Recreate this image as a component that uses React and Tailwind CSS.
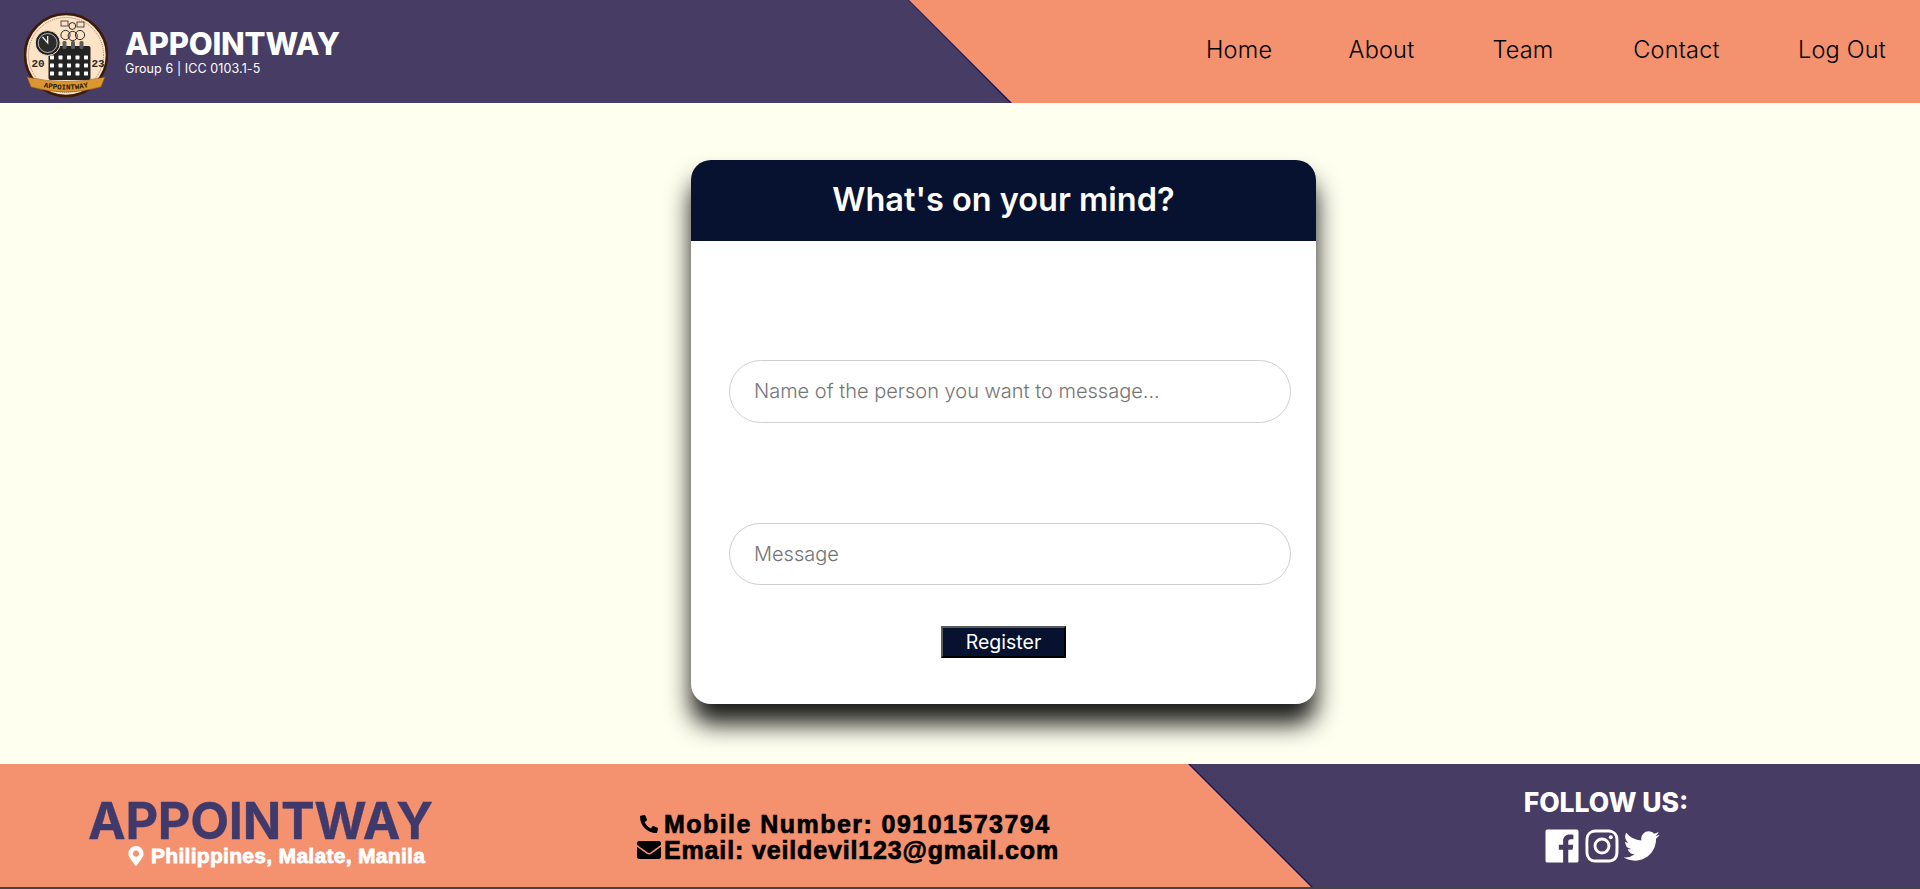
import React from "react";
import { FaMapMarkerAlt, FaPhoneAlt, FaEnvelope } from "react-icons/fa";
import { BiLogoFacebookSquare, BiLogoInstagram, BiLogoTwitter } from "react-icons/bi";

function Logo() {
  const xs = [28, 36.5, 45, 53.5, 62];
  const ys = [45.5, 53.5, 61.5];
  return (
    <svg width="84" height="86" viewBox="0 0 84 86" className="mt-[8px] shrink-0">
      <circle cx="42" cy="43" r="41" fill="#fde3c6" stroke="#3a1c08" strokeWidth="2.6" />
      <circle cx="42" cy="43" r="37.5" fill="none" stroke="#5a4030" strokeWidth="0.6" strokeDasharray="1 1" />
      <circle cx="48.3" cy="14" r="3.4" fill="none" stroke="#2a2a2a" strokeWidth="1" />
      <circle cx="41.5" cy="23" r="4.6" fill="none" stroke="#2a2a2a" strokeWidth="1" />
      <circle cx="56" cy="23" r="4.6" fill="none" stroke="#2a2a2a" strokeWidth="1" />
      <circle cx="48.7" cy="24" r="4.6" fill="none" stroke="#2a2a2a" strokeWidth="1" />
      <rect x="37" y="9" width="7" height="5" fill="#fde3c6" stroke="#2a2a2a" strokeWidth="0.8" />
      <rect x="53" y="10" width="7" height="5" fill="#fde3c6" stroke="#2a2a2a" strokeWidth="0.8" />
      <rect x="24.5" y="34" width="42" height="34" rx="2" fill="#232323" />
      <rect x="38.5" y="29" width="4" height="8" rx="1.5" fill="#5c5c5c" />
      <rect x="47" y="29" width="4" height="8" rx="1.5" fill="#5c5c5c" />
      <rect x="55.5" y="29" width="4" height="8" rx="1.5" fill="#5c5c5c" />
      {ys.map((y) => xs.map((x) => <rect key={`${x}-${y}`} x={x - 2} y={y - 2} width="4" height="4" fill="#fff" rx="0.4" />))}
      <circle cx="23.7" cy="31" r="12.5" fill="#222" stroke="#fde3c6" strokeWidth="1" />
      <circle cx="23.7" cy="31" r="9.5" fill="#2b2b2b" stroke="#ddd" strokeWidth="0.8" />
      <path d="M18.5 25 L23.7 31 L23.7 24" fill="none" stroke="#fff" strokeWidth="1.2" />
      <text x="14" y="55" textAnchor="middle" fontSize="11" fontWeight="700" fill="#2a2a2a" fontFamily="'Liberation Mono', monospace">20</text>
      <text x="74" y="55" textAnchor="middle" fontSize="11" fontWeight="700" fill="#2a2a2a" fontFamily="'Liberation Mono', monospace">23</text>
      <path d="M3 65 Q42 74 81 65 L77 75 Q42 85 7 75 Z" fill="#dc9630" stroke="#7a4a10" strokeWidth="0.5" />
      <path id="logo-arc" d="M10 73 Q42 82 74 73" fill="none" />
      <text fontSize="7.5" fontWeight="700" fill="#2a1a08" fontFamily="'Liberation Mono', monospace">
        <textPath href="#logo-arc" startOffset="50%" textAnchor="middle">APPOINTWAY</textPath>
      </text>
    </svg>
  );
}

export default function App() {
  const nav = [
    { label: "Home", width: "w-[66px]" },
    { label: "About", width: "w-[67px]" },
    { label: "Team", width: "w-[64px]" },
    { label: "Contact", width: "w-[91px]" },
    { label: "Log Out", width: "w-[85px]" },
  ];
  return (
    <div className="flex h-[889px] w-full flex-col overflow-hidden bg-[#fffff0] font-['Inter','Noto_Sans',sans-serif]">
      <header className="flex h-[103px] shrink-0 bg-[#f4916f]">
        <div className="h-full w-[1012px] shrink-0 bg-[#14145a] [clip-path:polygon(0_0,909px_0,1012px_100%,0_100%)]">
          <div className="flex h-full items-center gap-[17px] bg-[#463c64] pb-[1px] pl-[24px] [clip-path:polygon(0_0,908px_0,1010px_100%,0_100%)]">
            <Logo />
            <div className="mt-[2px] flex flex-col pb-[2px] text-white">
              <span className="text-[31px] leading-[34px] font-extrabold tracking-[-0.2px]">APPOINTWAY</span>
              <span className="text-[12.5px] leading-[15px] tracking-[0.1px]">Group 6 | ICC 0103.1-5</span>
            </div>
          </div>
        </div>
        <nav className="flex flex-1 items-center justify-end gap-[76px] pr-[37px] pb-[4px] text-[23.5px] font-light tracking-[0.2px] text-black">
          {nav.map((n) => (
            <span key={n.label} className={`${n.width} text-center whitespace-nowrap`}>
              {n.label}
            </span>
          ))}
        </nav>
      </header>

      <main className="flex-1 pt-[57px] pl-[691px]">
        <div className="flex h-[544px] w-[625px] flex-col rounded-[20px] bg-white shadow-[0_20px_25px_rgba(0,0,0,0.9)]">
          <div className="flex h-[81px] shrink-0 items-center justify-center rounded-t-[20px] bg-[#061230] text-[32.5px] font-semibold text-white">
            What's on your mind?
          </div>
          <div className="flex flex-1 flex-col items-start pt-[119px]">
            <input
              placeholder="Name of the person you want to message..."
              className="ml-[38px] h-[63px] w-[562px] rounded-full border border-[#cfcfcf] bg-white px-[24px] pb-[2px] text-[20px] font-light outline-none placeholder:text-[#757575]"
            />
            <input
              placeholder="Message"
              className="mt-[100px] ml-[38px] h-[62px] w-[562px] rounded-full border border-[#cfcfcf] bg-white px-[24px] text-[20px] font-light outline-none placeholder:text-[#757575]"
            />
            <button className="mt-[41px] h-[32px] w-[125px] self-center border-2 border-t-[#5a5a5a] border-r-black border-b-black border-l-[#5a5a5a] bg-[#061230] pb-[1px] text-[19.5px] leading-[24px] text-white">
              Register
            </button>
          </div>
        </div>
      </main>

      <footer className="flex h-[125px] shrink-0 border-b-2 border-[#444] bg-[#f4916f]">
        <div className="flex w-[1188px] shrink-0">
          <div className="flex w-[637px] shrink-0 flex-col items-start pt-[35px] pl-[88px]">
            <span className="text-[50.5px] leading-[44px] font-bold tracking-[-0.3px] text-[#3f3a6b] [-webkit-text-stroke:0.3px_#3f3a6b]">APPOINTWAY</span>
            <span className="mt-[1px] ml-[38px] flex items-center gap-[5px] font-['Liberation_Sans',sans-serif] text-[21px] leading-[24px] font-bold tracking-[0.3px] text-white [-webkit-text-stroke:0.8px_white]">
              <FaMapMarkerAlt className="text-[20px]" />
              Philippines, Malate, Manila
            </span>
          </div>
          <div className="flex flex-col pt-[47px] font-['Liberation_Sans',sans-serif] text-[25px] leading-[26px] font-bold text-black [-webkit-text-stroke:0.7px_black]">
            <span className="flex items-center tracking-[1.45px]">
              <span className="flex w-[27px] justify-end pr-[6px]">
                <FaPhoneAlt className="text-[18px]" />
              </span>
              Mobile Number: 09101573794
            </span>
            <span className="flex items-center tracking-[0.85px]">
              <span className="flex w-[27px] justify-start">
                <FaEnvelope className="text-[24px]" />
              </span>
              Email: veildevil123@gmail.com
            </span>
          </div>
        </div>
        <div className="h-full flex-1 bg-[#14145a] [clip-path:polygon(0_0,100%_0,100%_100%,123px_100%)]">
          <div className="flex h-full flex-col items-center bg-[#463c64] pt-[20px] pl-[104px] [clip-path:polygon(2px_0,100%_0,100%_100%,125px_100%)]">
            <span className="text-[26.5px] leading-[36px] font-extrabold text-white">FOLLOW US:</span>
            <div className="mt-[4px] mr-[9px] flex items-center text-white">
              <BiLogoFacebookSquare className="text-[44px]" />
              <BiLogoInstagram className="-ml-[4px] text-[44px]" />
              <BiLogoTwitter className="-ml-[4px] text-[44px]" />
            </div>
          </div>
        </div>
      </footer>
    </div>
  );
}
